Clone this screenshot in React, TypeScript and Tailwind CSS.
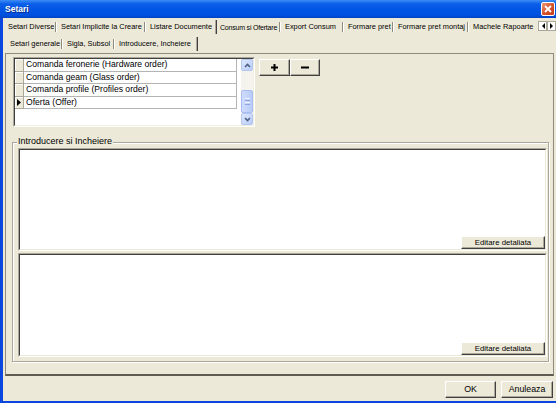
import React from 'react';

const raised =
  'bg-[#ECE9D8] border border-t-white border-l-white border-r-[#404040] border-b-[#404040] shadow-[inset_-1px_-1px_0_#ACA899]';

function Tab({ label, w, sel, last, tight }: { label: string; w: string; sel?: boolean; last?: boolean; tight?: boolean }) {
  return (
    <div className={`${w} h-full flex items-center shrink-0 overflow-hidden`}>
      <span
        className={`whitespace-nowrap overflow-hidden flex-1 min-w-0 ${
          tight ? 'pl-[3px] text-[7px] tracking-[-0.2px]' : 'pl-[4px]'
        }`}
      >
        {label}
      </span>
      {last ? null : sel ? (
        <div className="w-[2px] h-[14px] shrink-0 border-l border-l-[#ACA899] border-r border-r-[#404040]" />
      ) : (
        <div className="w-[2px] h-[10px] shrink-0 border-l border-l-[#8E8B7E] border-r border-r-white" />
      )}
    </div>
  );
}

function ArrowBox({ dir }: { dir: 'l' | 'r' }) {
  return (
    <div className="w-[9px] h-[10px] bg-white border border-[#ACA899] flex items-center justify-center">
      <svg width="4" height="6" viewBox="0 0 4 6">
        {dir === 'l' ? <polygon points="4,0 4,6 1,3" fill="#000" /> : <polygon points="0,0 0,6 3,3" fill="#000" />}
      </svg>
    </div>
  );
}

function ScrollArrow({ up }: { up?: boolean }) {
  return (
    <div className="h-[12px] w-full rounded-[2px] border border-[#B3C6F2] bg-[linear-gradient(135deg,#DDE8FE,#BACCF8)] flex items-center justify-center">
      <svg width="7" height="5" viewBox="0 0 7 5">
        {up ? (
          <polyline points="1,4 3.5,1.5 6,4" fill="none" stroke="#4D6185" strokeWidth="1.6" />
        ) : (
          <polyline points="1,1 3.5,3.5 6,1" fill="none" stroke="#4D6185" strokeWidth="1.6" />
        )}
      </svg>
    </div>
  );
}

function Scrollbar() {
  return (
    <div className="w-[12px] h-full flex flex-col bg-[#F4F3EE]">
      <ScrollArrow up />
      <div className="flex-1 flex flex-col">
        <div className="mt-[19px] h-[23px] rounded-[2px] border border-[#A7BCF0] bg-[linear-gradient(90deg,#CFDCFD,#B9CBF8)] flex flex-col items-center justify-center gap-[1px]">
          <div className="w-[5px] h-[1px] bg-[#EEF3FF]" />
          <div className="w-[5px] h-[1px] bg-[#8CA5E3]" />
          <div className="w-[5px] h-[1px] bg-[#EEF3FF]" />
          <div className="w-[5px] h-[1px] bg-[#8CA5E3]" />
        </div>
      </div>
      <ScrollArrow />
    </div>
  );
}

const rows = [
  'Comanda feronerie (Hardware order)',
  'Comanda geam (Glass order)',
  'Comanda profile (Profiles order)',
  'Oferta (Offer)',
];

function Grid() {
  return (
    <div className="w-[242px] h-[70px] border border-t-[#ACA899] border-l-[#ACA899] border-r-white border-b-white shrink-0">
      <div className="w-full h-full border border-t-[#404040] border-l-[#404040] border-r-[#F1EFE2] border-b-[#F1EFE2] bg-white flex">
        <div className="flex-1 flex flex-col">
          {rows.map((r, i) => (
            <div key={r} className="flex h-[12.5px]">
              <div className="w-[9px] h-full bg-[#ECE9D8] border-r border-b border-[#ACA899] shadow-[inset_1px_1px_0_#fff] flex items-center justify-center">
                {i === 3 ? (
                  <svg width="4" height="7" viewBox="0 0 4 7">
                    <polygon points="0,0 4,3.5 0,7" fill="#000" />
                  </svg>
                ) : null}
              </div>
              <div className="w-[213px] h-full border-r border-b border-[#B4B4B4] pl-[2px] flex items-center whitespace-nowrap overflow-hidden text-[8.6px]">
                {r}
              </div>
            </div>
          ))}
        </div>
        <Scrollbar />
      </div>
    </div>
  );
}

function Memo({ h }: { h: string }) {
  return (
    <div className={`w-[529px] ${h} border border-t-[#ACA899] border-l-[#ACA899] border-r-white border-b-white`}>
      <div className="w-full h-full bg-white border border-t-[#404040] border-l-[#404040] border-r-[#ECE9D8] border-b-[#ECE9D8] flex flex-col justify-end items-end">
        <div className={`${raised} w-[84px] h-[13px] flex items-center justify-center text-[7.8px]`}>Editare detaliata</div>
      </div>
    </div>
  );
}

export default function App() {
  return (
    <div className="w-[556px] h-[403px] overflow-hidden bg-[#ECE9D8] flex flex-col font-['Liberation_Sans',Arial,sans-serif] text-[7.4px] leading-none text-black">
      {/* Title bar */}
      <div className="h-[18px] shrink-0 flex items-center justify-between bg-[linear-gradient(180deg,#3D8DF7_0%,#0A5EE8_22%,#0054E3_60%,#0050DE_85%,#0042C4_100%)]">
        <span className="pl-[5px] pt-[1px] text-white font-bold text-[8.5px] [text-shadow:1px_1px_0_#0A2A8A]">
          Setari
        </span>
        <div className="mr-[1px] w-[14px] h-[14px] rounded-[2px] border border-white bg-[linear-gradient(135deg,#EC9A7A,#D6502A_55%,#C33E18)] flex items-center justify-center">
          <svg width="8" height="8" viewBox="0 0 8 8">
            <path d="M1 1 L7 7 M7 1 L1 7" stroke="#fff" strokeWidth="1.8" />
          </svg>
        </div>
      </div>

      <div className="flex flex-1 min-h-0">
        <div className="w-[3px] bg-[#0B47DF] shrink-0" />
        <div className="flex-1 flex flex-col min-w-0">
          {/* Tab row 1 */}
          <div className="mt-[1px] h-[16px] flex items-center shrink-0">
            <div className="ml-[1px] flex h-full">
              <Tab label="Setari Diverse" w="w-[53px]" />
              <Tab label="Setari Implicite la Creare" w="w-[89px]" />
              <Tab label="Listare Documente" w="w-[71px]" sel />
              <Tab label="Consum si Ofertare" w="w-[64px]" tight />
              <Tab label="Export Consum" w="w-[63px]" />
              <Tab label="Formare pret" w="w-[50px]" />
              <Tab label="Formare pret montaj" w="w-[75px]" />
              <Tab label="Machele Rapoarte" w="w-[69px]" last />
            </div>
            <div className="flex self-start mt-[2px]">
              <ArrowBox dir="l" />
              <ArrowBox dir="r" />
            </div>
          </div>
          {/* Tab row 2 */}
          <div className="mt-[1px] h-[16px] flex items-center shrink-0">
            <div className="ml-[3px] flex h-full">
              <Tab label="Setari generale" w="w-[57px]" />
              <Tab label="Sigla, Subsol" w="w-[52px]" />
              <Tab label="Introducere, Incheiere" w="w-[83px]" sel />
            </div>
          </div>

          {/* Page panel */}
          <div className="mt-[1px] ml-[2px] w-[549px] h-[323px] shrink-0 border border-[#8E8B7E] border-b-2 border-b-[#5E5C52] flex flex-col">
            <div className="flex ml-[7px] mt-[3px]">
              <Grid />
              <div className="flex ml-[4px] mt-[2px]">
                <div className={`${raised} w-[31px] h-[17px] flex items-center justify-center`}>
                  <svg width="7" height="7" viewBox="0 0 7 7">
                    <path d="M3.5 0 V7 M0 3.5 H7" stroke="#000" strokeWidth="2" />
                  </svg>
                </div>
                <div className={`${raised} w-[30px] h-[17px] flex items-center justify-center`}>
                  <svg width="8" height="3" viewBox="0 0 8 3">
                    <path d="M0 1.5 H8" stroke="#000" strokeWidth="2" />
                  </svg>
                </div>
              </div>
            </div>

            {/* Group box */}
            <div className="relative ml-[6px] mt-[15px] w-[537px] h-[220px] border border-[#ACA899] shadow-[1px_1px_0_#fff,inset_1px_1px_0_#fff] pl-[5px] pt-[5px] flex flex-col gap-[2px]">
              <span className="absolute -top-[6px] left-[4px] px-[1px] bg-[#ECE9D8] text-[9px]">Introducere si Incheiere</span>
              <Memo h="h-[103px]" />
              <Memo h="h-[104px]" />
            </div>
          </div>

          {/* Bottom buttons */}
          <div className="flex-1 flex justify-end items-start pt-[5px] pr-[3px] gap-[5px] text-[8.8px]">
            <div className={`${raised} w-[51px] h-[17px] flex items-center justify-center`}>OK</div>
            <div className={`${raised} w-[52px] h-[17px] flex items-center justify-center`}>Anuleaza</div>
          </div>
        </div>
      </div>
      <div className="h-[2px] bg-[#0B47DF] shrink-0" />
    </div>
  );
}
